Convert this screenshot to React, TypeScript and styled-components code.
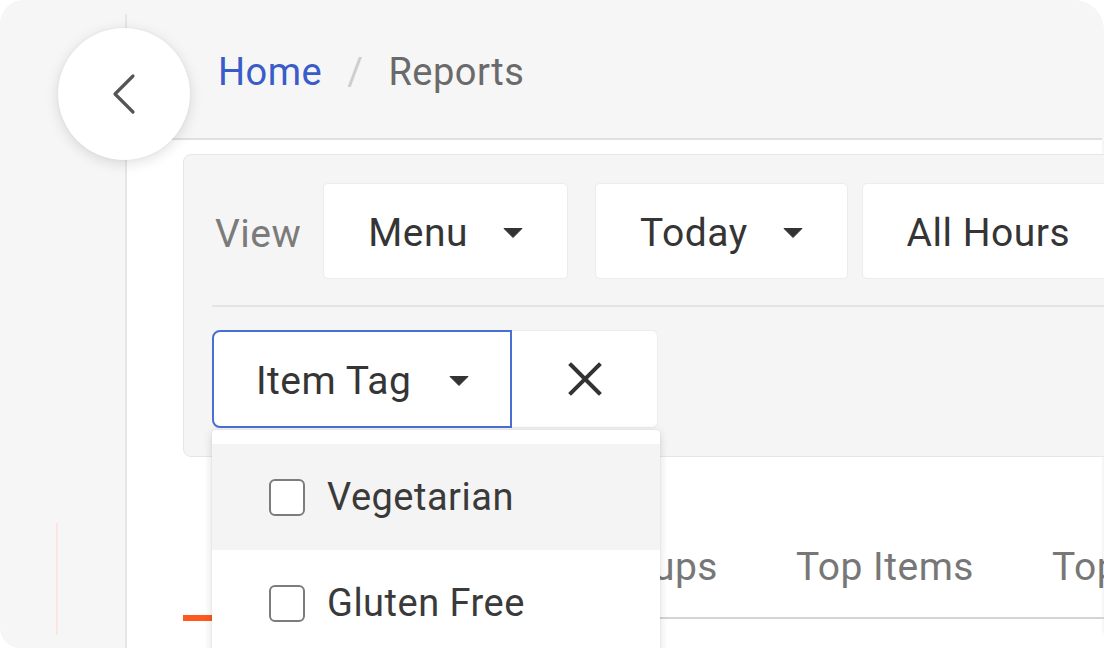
import React from "react";
import styled, { createGlobalStyle } from "styled-components";

const GlobalStyle = createGlobalStyle`
  html, body { margin: 0; padding: 0; background: #ffffff; }
  body { font-family: Roboto, "Liberation Sans", Arial, sans-serif; letter-spacing: 0.5px; }
  * { box-sizing: border-box; }
`;

const Frame = styled.div`
  position: relative;
  width: 1104px;
  height: 648px;
  display: flex;
  background: #f6f6f6;
  border-radius: 24px 30px 20px 20px;
  overflow: hidden;
`;

const Sidebar = styled.aside`
  width: 125px;
  flex-shrink: 0;
  display: flex;
  flex-direction: column;
`;

const NavIndicator = styled.div`
  width: 2px;
  height: 112px;
  margin: 523px 0 0 56px;
  background: #fde6df;
`;

const Main = styled.main`
  flex: 1;
  min-width: 0;
  margin-top: 14px;
  margin-right: 2px;
  border-left: 2px solid #e6e6e6;
  display: flex;
  flex-direction: column;
`;

const Header = styled.header`
  height: 126px;
  flex-shrink: 0;
  padding: 36px 0 0 91px;
  border-bottom: 2px solid #e0e0e0;
  display: flex;
  align-items: flex-start;
  font-size: 38px;
  line-height: 44px;
`;

const Crumb = styled.span<{ $link?: boolean }>`
  color: ${(p) => (p.$link ? "#3a5cc9" : "#6a6a6a")};
`;

const CrumbSep = styled.span`
  color: #cdcdcd;
  margin: 0 25px;
`;

const Body = styled.section`
  flex: 1;
  background: #ffffff;
  padding: 14px 0 0 56px;
  display: flex;
  flex-direction: column;
`;

const FilterCard = styled.div`
  margin-right: -40px;
  background: #f5f5f5;
  border: 1.5px solid #e6e6e6;
  border-radius: 8px;
  padding: 28px 0 28px 28px;
  display: flex;
  flex-direction: column;
  position: relative;
  z-index: 2;
`;

const FilterRow = styled.div`
  display: flex;
  align-items: center;
  flex-wrap: nowrap;
`;

const ViewLabel = styled.span`
  font-size: 39px;
  line-height: 44px;
  padding-top: 6px;
  color: #7b7b7b;
  margin: 0 22px 0 3px;
  white-space: nowrap;
`;

const SelectButton = styled.button<{ $gapAfter?: number }>`
  flex-shrink: 0;
  height: 96px;
  padding: 4px 44px 0;
  margin-right: ${(p) => p.$gapAfter ?? 14}px;
  background: #ffffff;
  border: 1.5px solid #ececec;
  border-radius: 5px;
  display: flex;
  align-items: center;
  gap: 35px;
  font-family: inherit;
  font-size: 39px;
  line-height: 44px;
  letter-spacing: 0.5px;
  color: #353535;
  white-space: nowrap;
`;

const Divider = styled.div`
  height: 2px;
  background: #e4e4e4;
  margin: 26px 0 23px;
`;

const TagGroup = styled.div`
  position: relative;
  display: flex;
  align-self: flex-start;
`;

const TagButton = styled.button`
  width: 300px;
  height: 98px;
  padding: 4px 0 0 42px;
  background: #ffffff;
  border: 2px solid #4a6fd4;
  border-radius: 8px 0 0 8px;
  display: flex;
  align-items: center;
  gap: 38px;
  font-family: inherit;
  font-size: 39px;
  line-height: 44px;
  letter-spacing: 0.5px;
  color: #353535;
  white-space: nowrap;
`;

const ClearButton = styled.button`
  width: 146px;
  height: 98px;
  background: #ffffff;
  border: 1.5px solid #ececec;
  border-left: none;
  border-radius: 0 6px 6px 0;
  display: flex;
  align-items: center;
  justify-content: center;
  padding: 0;
`;

const Menu = styled.div`
  position: absolute;
  top: 100px;
  left: 0;
  width: 448px;
  padding-top: 14px;
  background: #ffffff;
  border-radius: 4px;
  box-shadow: 0 2px 10px rgba(0, 0, 0, 0.14), 0 0 2px rgba(0, 0, 0, 0.08);
  z-index: 5;
  display: flex;
  flex-direction: column;
`;

const MenuItem = styled.label<{ $active?: boolean }>`
  height: 106px;
  padding-left: 57px;
  display: flex;
  align-items: center;
  gap: 22px;
  background: ${(p) => (p.$active ? "#f4f4f4" : "#ffffff")};
  font-size: 38px;
  line-height: 44px;
  color: #3a3a3a;
  white-space: nowrap;
`;

const Box = styled.span`
  width: 36px;
  height: 37px;
  border: 2px solid #7c7c7c;
  border-radius: 6px;
  background: #ffffff;
  flex-shrink: 0;
`;

const Tabs = styled.nav`
  margin-top: 65px;
  margin-right: -40px;
  display: flex;
  border-bottom: 2px solid #d4d4d4;
  white-space: nowrap;
`;

const Tab = styled.div<{ $active?: boolean; $padLeft?: number }>`
  position: relative;
  padding: 23px 39px 28px ${(p) => p.$padLeft ?? 39}px;
  font-size: 39px;
  line-height: 44px;
  color: #777777;
  flex-shrink: 0;
  &::after {
    content: "";
    display: ${(p) => (p.$active ? "block" : "none")};
    position: absolute;
    left: 0;
    right: 0;
    bottom: -4px;
    height: 6px;
    background: #ff5a1e;
  }
`;

const BackButton = styled.button`
  position: absolute;
  left: 58px;
  top: 28px;
  width: 132px;
  height: 132px;
  border-radius: 50%;
  border: none;
  background: #ffffff;
  box-shadow: 0 3px 14px rgba(0, 0, 0, 0.13), 0 0 3px rgba(0, 0, 0, 0.05);
  display: flex;
  align-items: center;
  justify-content: center;
  padding: 0;
  z-index: 10;
`;

const Caret = () => (
  <svg width="20" height="10" viewBox="0 0 20 10">
    <path d="M1 0.5 H19 L10 9.5 Z" fill="#333" stroke="#333" strokeWidth="1" strokeLinejoin="round" />
  </svg>
);

export default function App() {
  return (
    <>
      <GlobalStyle />
      <Frame>
        <Sidebar>
          <NavIndicator />
        </Sidebar>
        <Main>
          <Header>
            <Crumb $link>Home</Crumb>
            <CrumbSep>/</CrumbSep>
            <Crumb>Reports</Crumb>
          </Header>
          <Body>
            <FilterCard>
              <FilterRow>
                <ViewLabel>View</ViewLabel>
                <SelectButton $gapAfter={27}>
                  Menu <Caret />
                </SelectButton>
                <SelectButton>
                  Today <Caret />
                </SelectButton>
                <SelectButton>
                  All Hours <Caret />
                </SelectButton>
              </FilterRow>
              <Divider />
              <TagGroup>
                <TagButton>
                  Item Tag <Caret />
                </TagButton>
                <ClearButton aria-label="Clear">
                  <svg width="34" height="34" viewBox="0 0 34 34">
                    <path d="M3 3 L31 31 M31 3 L3 31" stroke="#333" strokeWidth="4" strokeLinecap="square" />
                  </svg>
                </ClearButton>
                <Menu>
                  <MenuItem $active>
                    <Box />
                    Vegetarian
                  </MenuItem>
                  <MenuItem>
                    <Box />
                    Gluten Free
                  </MenuItem>
                </Menu>
              </TagGroup>
            </FilterCard>
            <Tabs>
              <Tab $active $padLeft={49}>Summary</Tab>
              <Tab>Menu Groups</Tab>
              <Tab>Top Items</Tab>
              <Tab>Top Modifiers</Tab>
            </Tabs>
          </Body>
        </Main>
        <BackButton aria-label="Back">
          <svg width="26" height="42" viewBox="0 0 26 42">
            <path d="M22 3 L4 21 L22 39" fill="none" stroke="#555" strokeWidth="3.2" strokeLinecap="round" strokeLinejoin="round" />
          </svg>
        </BackButton>
      </Frame>
    </>
  );
}
